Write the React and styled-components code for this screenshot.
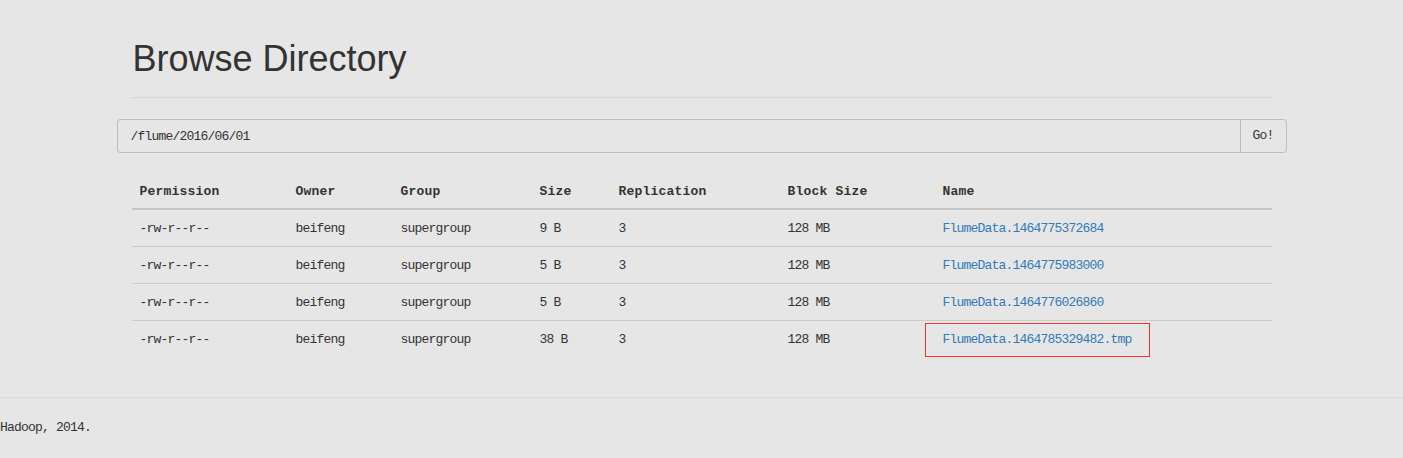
import React from "react";
import styled, { createGlobalStyle } from "styled-components";

const GlobalStyle = createGlobalStyle`
  body {
    margin: 0;
    background: #e6e6e6;
    color: #333;
    font-family: "Liberation Mono", "DejaVu Sans Mono", monospace;
    font-size: 13px;
    letter-spacing: -0.8px;
    line-height: 20px;
  }
`;

const Container = styled.div`
  width: 1170px;
  margin: 0 auto;
`;

const PageHeader = styled.div`
  margin: 0 15px;
  padding: 39px 0 18px 1px;
  border-bottom: 1px solid #d6d6d6;
`;

const Title = styled.h1`
  margin: 0;
  font-family: "Liberation Sans", Arial, sans-serif;
  font-size: 36px;
  font-weight: 500;
  line-height: 40px;
  letter-spacing: 0;
  color: #333;
`;

const SearchForm = styled.form`
  display: flex;
  margin-top: 21px;
  height: 34px;
`;

const PathInput = styled.input`
  flex: 1;
  box-sizing: border-box;
  height: 34px;
  padding: 0 12px 0 13px;
  border: 1px solid #bdbdbd;
  border-right: 0;
  border-radius: 4px 0 0 4px;
  background: #e6e6e6;
  color: #333;
  font: inherit;
  letter-spacing: inherit;
  outline: none;
`;

const GoButton = styled.button`
  box-sizing: border-box;
  width: 47px;
  height: 34px;
  padding: 0;
  border: 1px solid #bdbdbd;
  border-radius: 0 4px 4px 0;
  background: #e6e6e6;
  color: #333;
  font: inherit;
  letter-spacing: inherit;
`;

const Table = styled.table`
  width: 1140px;
  margin: 21px 15px 0;
  border-collapse: collapse;
  table-layout: fixed;
`;

const Th = styled.th`
  box-sizing: border-box;
  width: ${(p) => p.$w}px;
  padding: 8px 8px 6px;
  text-align: left;
  font-weight: bold;
  letter-spacing: 0.2px;
  border-bottom: 2px solid #c6c6c6;
`;

const Td = styled.td`
  position: relative;
  padding: 9px 8px 7px;
  border-top: 1px solid #cbcbcb;
`;

const FileLink = styled.a`
  color: #337ab7;
  text-decoration: none;
`;

const Highlight = styled.span`
  position: absolute;
  left: -10px;
  top: 2px;
  width: 225px;
  height: 34px;
  box-sizing: border-box;
  border: 1px solid rgb(240, 50, 50);
  pointer-events: none;
`;

const Footer = styled.footer`
  margin-top: 40px;
  padding-top: 20px;
  border-top: 1px solid #d6d6d6;
`;

const columns = [
  ["Permission", 156],
  ["Owner", 105],
  ["Group", 139],
  ["Size", 79],
  ["Replication", 169],
  ["Block Size", 155],
  ["Name", 337],
];

const files = [
  { size: "9 B", name: "FlumeData.1464775372684" },
  { size: "5 B", name: "FlumeData.1464775983000" },
  { size: "5 B", name: "FlumeData.1464776026860" },
  { size: "38 B", name: "FlumeData.1464785329482.tmp", marked: true },
];

export default function App() {
  return (
    <>
      <GlobalStyle />
      <Container>
        <PageHeader>
          <Title>Browse Directory</Title>
        </PageHeader>
        <SearchForm onSubmit={(e) => e.preventDefault()}>
          <PathInput defaultValue="/flume/2016/06/01" />
          <GoButton type="submit">Go!</GoButton>
        </SearchForm>
        <Table>
          <thead>
            <tr>
              {columns.map(([label, w]) => (
                <Th key={label} $w={w}>
                  {label}
                </Th>
              ))}
            </tr>
          </thead>
          <tbody>
            {files.map((f) => (
              <tr key={f.name}>
                <Td>-rw-r--r--</Td>
                <Td>beifeng</Td>
                <Td>supergroup</Td>
                <Td>{f.size}</Td>
                <Td>3</Td>
                <Td>128 MB</Td>
                <Td>
                  <FileLink href="#">{f.name}</FileLink>
                  {f.marked && <Highlight />}
                </Td>
              </tr>
            ))}
          </tbody>
        </Table>
      </Container>
      <Footer>Hadoop, 2014.</Footer>
    </>
  );
}
